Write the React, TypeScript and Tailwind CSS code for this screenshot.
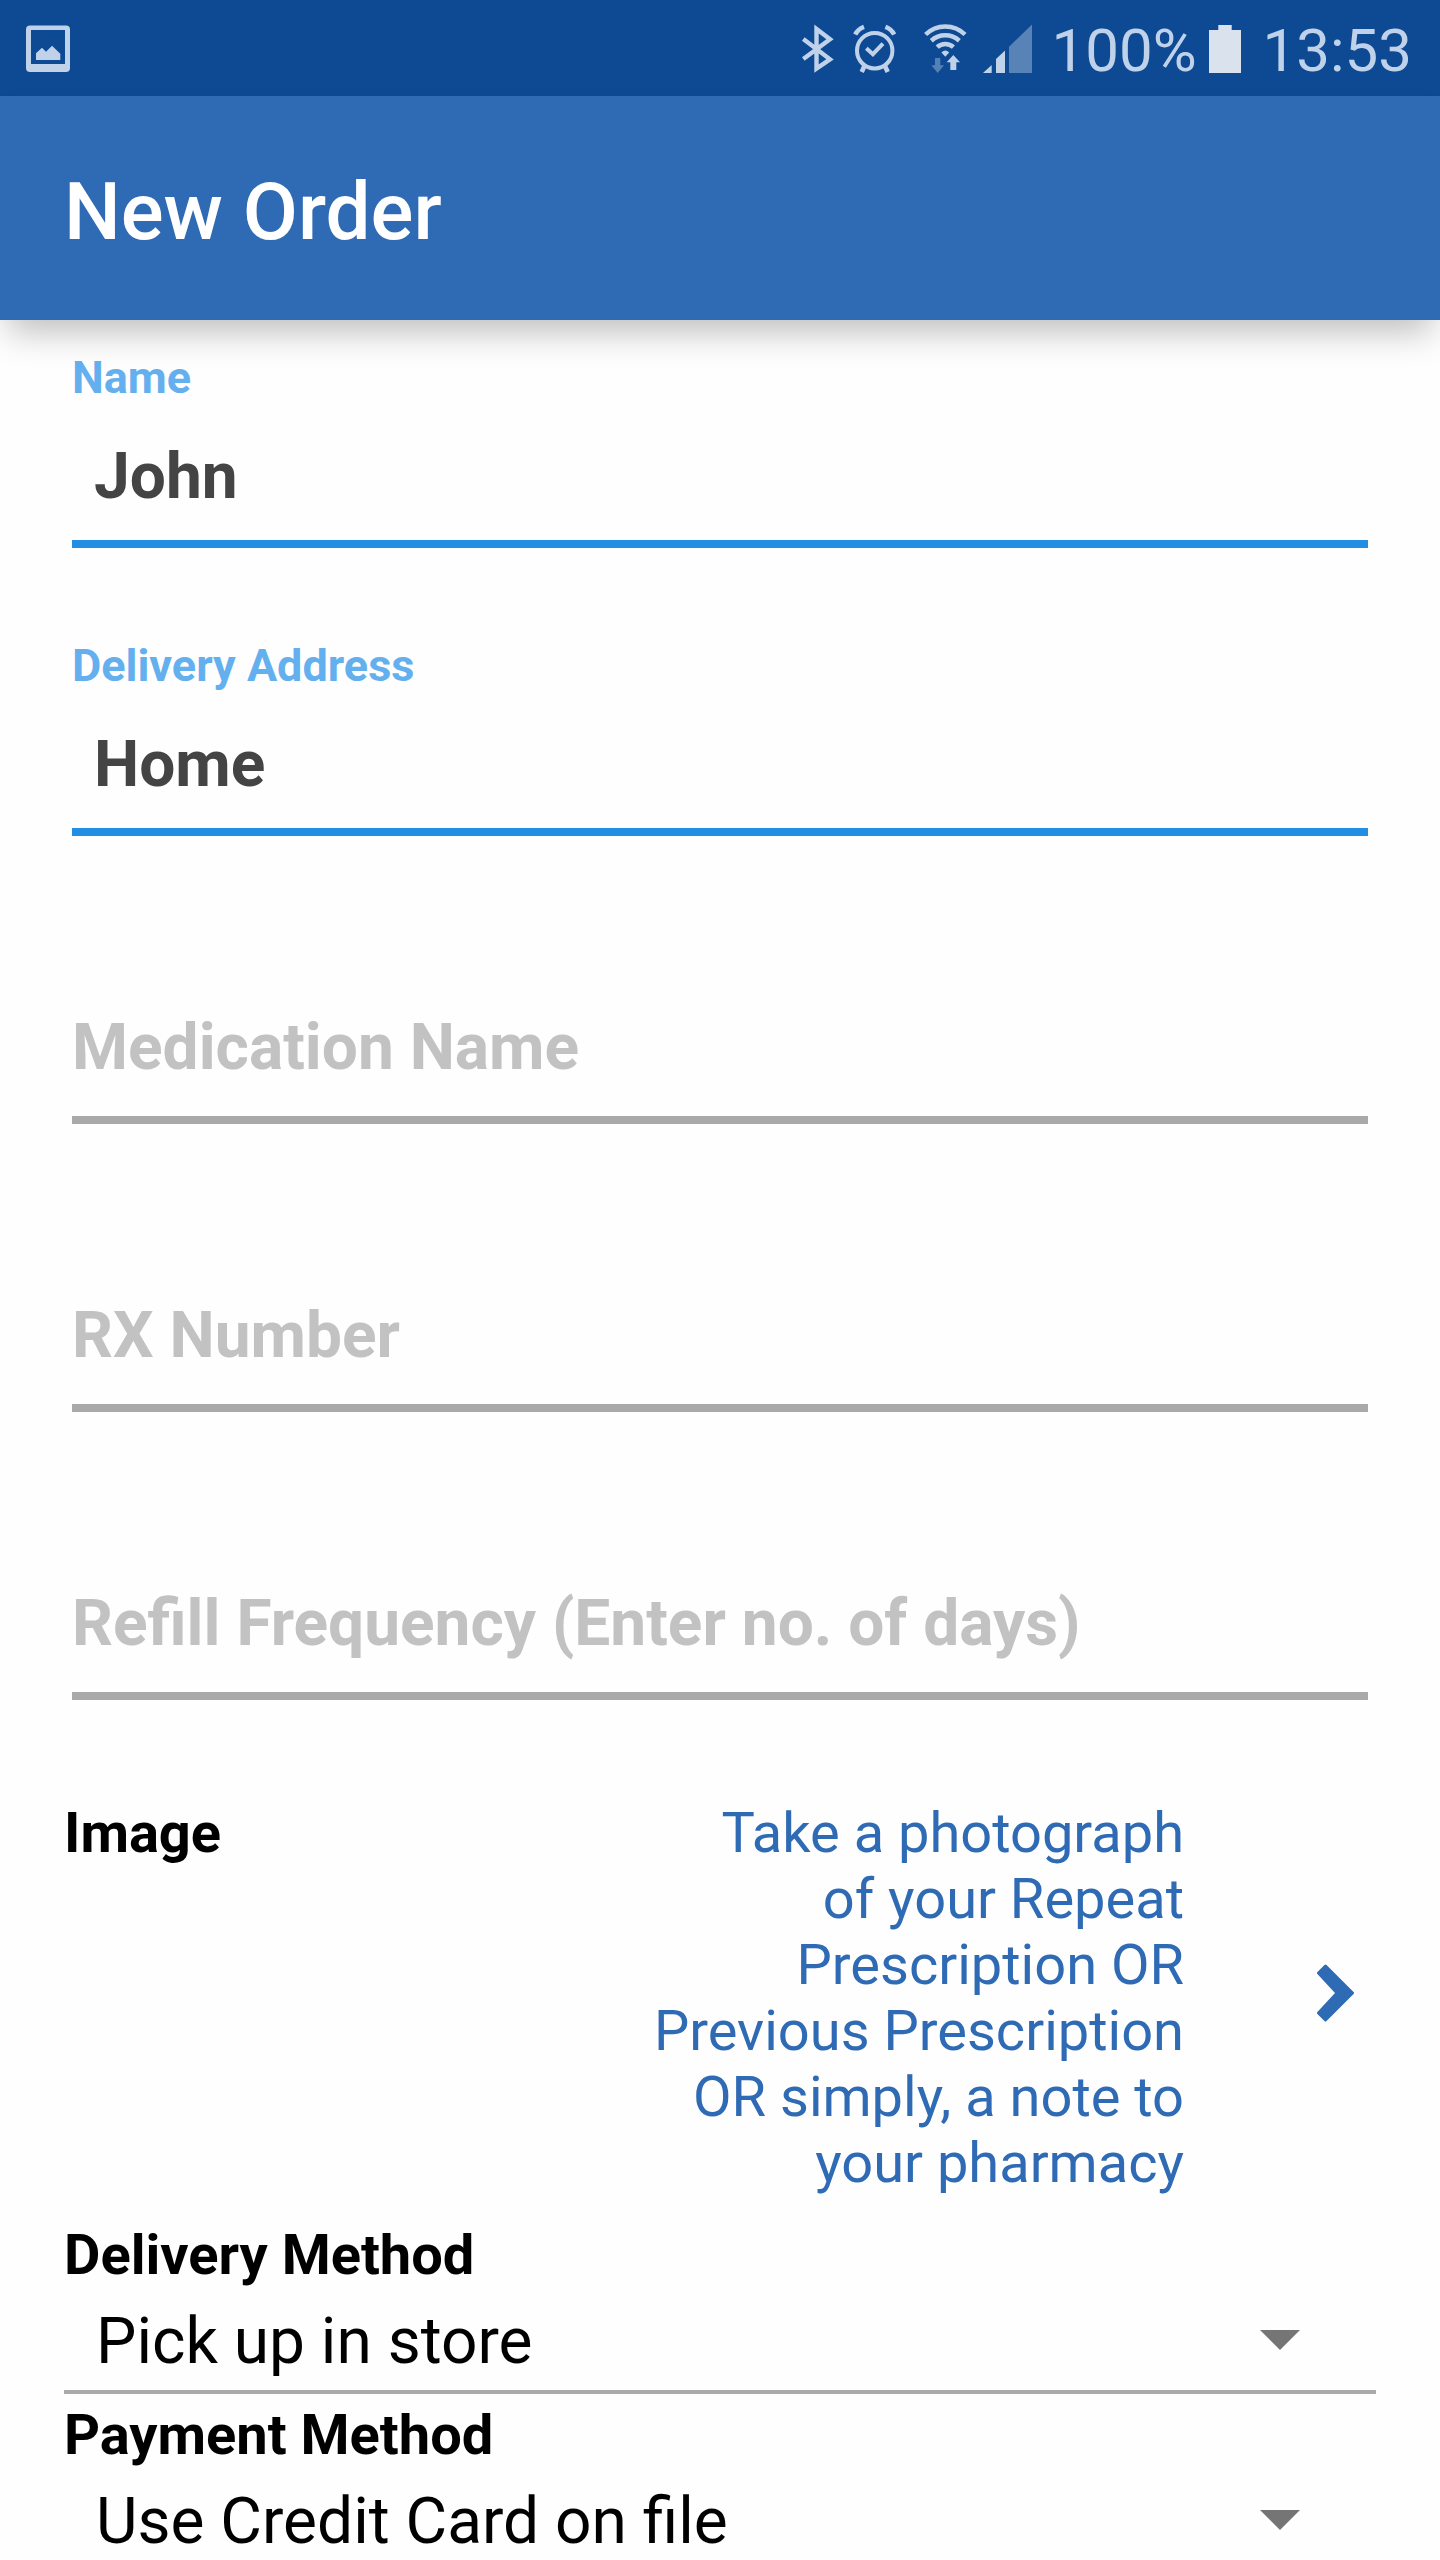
import React, { useState } from 'react';

const StatusBar: React.FC = () => (
  <div className="flex h-24 shrink-0 items-center bg-[#0d4a93] pt-0.5 pl-[26px] pr-7 text-[60px] leading-[70px] text-[#c0d2ea]">
    <svg className="mr-auto h-[50px] w-11" viewBox="0 0 44 50" fill="currentColor" aria-hidden="true">
      <path fillRule="evenodd" d="M4 1.5H40Q44 1.5 44 5.5V44Q44 48 40 48H4Q0 48 0 44V5.5Q0 1.5 4 1.5ZM5 6V40H39V6Z" />
      <path d="M10 36V29.3L16 23.7L20 27.7L26 21.7L34.3 29.7V36Z" />
    </svg>
    {/* bluetooth */}
    <svg className="mr-[18px] h-[50px] w-[34px]" viewBox="0 0 34 50" fill="none" stroke="currentColor" strokeWidth="4.4" aria-hidden="true">
      <path d="M2.3 15L29 35.3L15.5 44.5V5L29 15.3L2.3 35" />
    </svg>
    {/* alarm */}
    <svg className="mr-[27px] h-[50px] w-11" viewBox="0 0 44 50" fill="none" stroke="currentColor" strokeWidth="4" aria-hidden="true">
      <circle cx="21.7" cy="26.7" r="17.7" />
      <path d="M2.2 10.5Q5 5 11 2.8M41.2 10.5Q38.4 5 32.4 2.8" strokeWidth="4.6" />
      <path d="M11.2 42.5L8.7 48M32.2 42.5L34.7 48" strokeWidth="4.6" />
      <path d="M13.3 24.3L19.9 30.2L30 19.7" />
    </svg>
    {/* wifi */}
    <svg className="mr-3.5 h-[50px] w-11" viewBox="0 0 44 50" fill="currentColor" aria-hidden="true">
      <g fill="none" stroke="currentColor" strokeWidth="4.5">
        <path d="M1.6 10.5A28 28 0 0 1 41 10.5" />
        <path d="M7.3 16.7A21 21 0 0 1 35.3 16.7" />
        <path d="M13.2 23.2A12 12 0 0 1 29.4 23.2" />
      </g>
      <path d="M17.4 28.6Q21.3 24.4 25.2 28.6L21.3 32.8Z" />
      <path d="M29.3 31L36 38.3H32.3V46H26.3V38.3H22.7Z" />
      <path d="M11 34H16.3V41.3H20L13.7 49L7.3 41.3H11Z" opacity="0.4" />
    </svg>
    {/* mobile signal */}
    <svg className="mr-[19px] h-[50px] w-[50px]" viewBox="0 0 50 50" fill="currentColor" aria-hidden="true">
      <path d="M1 49L9.7 41V49Z" />
      <path d="M14 49V35L23 26.5V49Z" />
      <path d="M27 49V22.7L50 0.5V49Z" opacity="0.42" />
    </svg>
    <span className="pt-1">100%</span>
    <svg className="mr-[22px] ml-3 h-[50px] w-8 text-[#dae3ed]" viewBox="0 0 32 50" fill="currentColor" aria-hidden="true">
      <path d="M9.3 1H22.7V6H32V49H0V6H9.3Z" />
    </svg>
    <span className="pt-1">13:53</span>
  </div>
);

interface TextFieldProps {
  id: string;
  label: string;
  initial?: string;
  first?: boolean;
}

const TextField: React.FC<TextFieldProps> = ({ id, label, initial = '', first = false }) => {
  const [value, setValue] = useState(initial);
  const filled = value !== '';

  return (
    <div className={first ? 'pt-8' : 'pt-[92px]'}>
      <div className="relative pt-[52px]">
        {/* the label rests on the line until something is typed */}
        <label
          htmlFor={id}
          className={
            filled
              ? 'absolute top-0 left-0 text-[45px] leading-[52px] font-bold text-[#64b0ee]'
              : 'absolute bottom-0 left-0 flex h-36 items-center pb-2 text-[64px] leading-[76px] font-bold text-[#c2c2c2]'
          }
        >
          {label}
        </label>
        <input
          id={id}
          type="text"
          value={value}
          onChange={(e) => setValue(e.target.value)}
          className={
            filled
              ? 'block h-36 w-full border-b-8 border-[#218de5] bg-transparent pt-2 pl-[22px] text-[64px] font-bold text-[#444444] outline-none'
              : 'block h-36 w-full border-b-8 border-[#a9a9a9] bg-transparent pt-2 pl-[22px] text-[64px] font-bold text-[#444444] outline-none'
          }
        />
      </div>
    </div>
  );
};

interface SelectFieldProps {
  id: string;
  label: string;
  options: string[];
}

const SelectField: React.FC<SelectFieldProps> = ({ id, label, options }) => (
  <div className="flex flex-col">
    <label htmlFor={id} className="text-[56px] leading-[66px] font-bold">
      {label}
    </label>
    <div className="relative">
      <select
        id={id}
        className="block h-[106px] w-full appearance-none border-b-4 border-[#a9a9a9] bg-transparent pt-1.5 pl-8 text-[64px] outline-none"
      >
        {options.map((option) => (
          <option key={option}>{option}</option>
        ))}
      </select>
      <svg
        className="pointer-events-none absolute top-[42px] right-[76px] h-5 w-10 text-[#757575]"
        viewBox="0 0 40 20"
        fill="currentColor"
        aria-hidden="true"
      >
        <path d="M0 0H40L20 20Z" />
      </svg>
    </div>
  </div>
);

const App: React.FC = () => {
  return (
    <div className="flex h-screen flex-col overflow-hidden bg-[#fefefe] font-['Roboto',sans-serif] text-black">
      <StatusBar />
      <header className="z-10 flex h-56 shrink-0 items-center bg-[#2f6bb5] px-16 pt-2 shadow-[0_20px_32px_-8px_rgba(0,0,0,0.25)]">
        <h1 className="text-[80px] leading-[94px] font-medium text-white">New Order</h1>
      </header>
      <main className="min-h-0 flex-1 overflow-y-auto [scrollbar-width:none]">
        <form>
          <div className="px-[72px]">
            <TextField id="name" label="Name" initial="John" first />
            <TextField id="address" label="Delivery Address" initial="Home" />
            <TextField id="medication" label="Medication Name" />
            <TextField id="rx" label="RX Number" />
            <TextField id="refill" label="Refill Frequency (Enter no. of days)" />
          </div>
          <div className="px-16 pt-[100px]">
            <div className="flex items-start justify-between">
              <span id="image-label" className="text-[56px] leading-[66px] font-bold">
                Image
              </span>
              <button
                type="button"
                aria-describedby="image-label"
                className="flex items-center gap-[132px] pr-[22px] text-right text-[56px] leading-[66px] text-[#2f6bb5]"
              >
                <span className="w-[540px]">
                  Take a photograph
                  <br />
                  of your Repeat Prescription OR Previous Prescription OR simply, a note to your pharmacy
                </span>
                <svg className="mb-2.5 h-[60px] w-[38px]" viewBox="0 0 38 60" fill="currentColor" aria-hidden="true">
                  <path
                    d="M9.5 3L36.5 30L9.5 57L2.5 50L21 30L2.5 10Z"
                    stroke="currentColor"
                    strokeWidth="3"
                    strokeLinejoin="round"
                  />
                </svg>
              </button>
            </div>
            <div className="flex flex-col gap-2 pt-[26px]">
              <SelectField id="delivery" label="Delivery Method" options={['Pick up in store', 'Home delivery']} />
              <SelectField id="payment" label="Payment Method" options={['Use Credit Card on file', 'Pay in store']} />
            </div>
          </div>
        </form>
      </main>
    </div>
  );
};

export default App;
